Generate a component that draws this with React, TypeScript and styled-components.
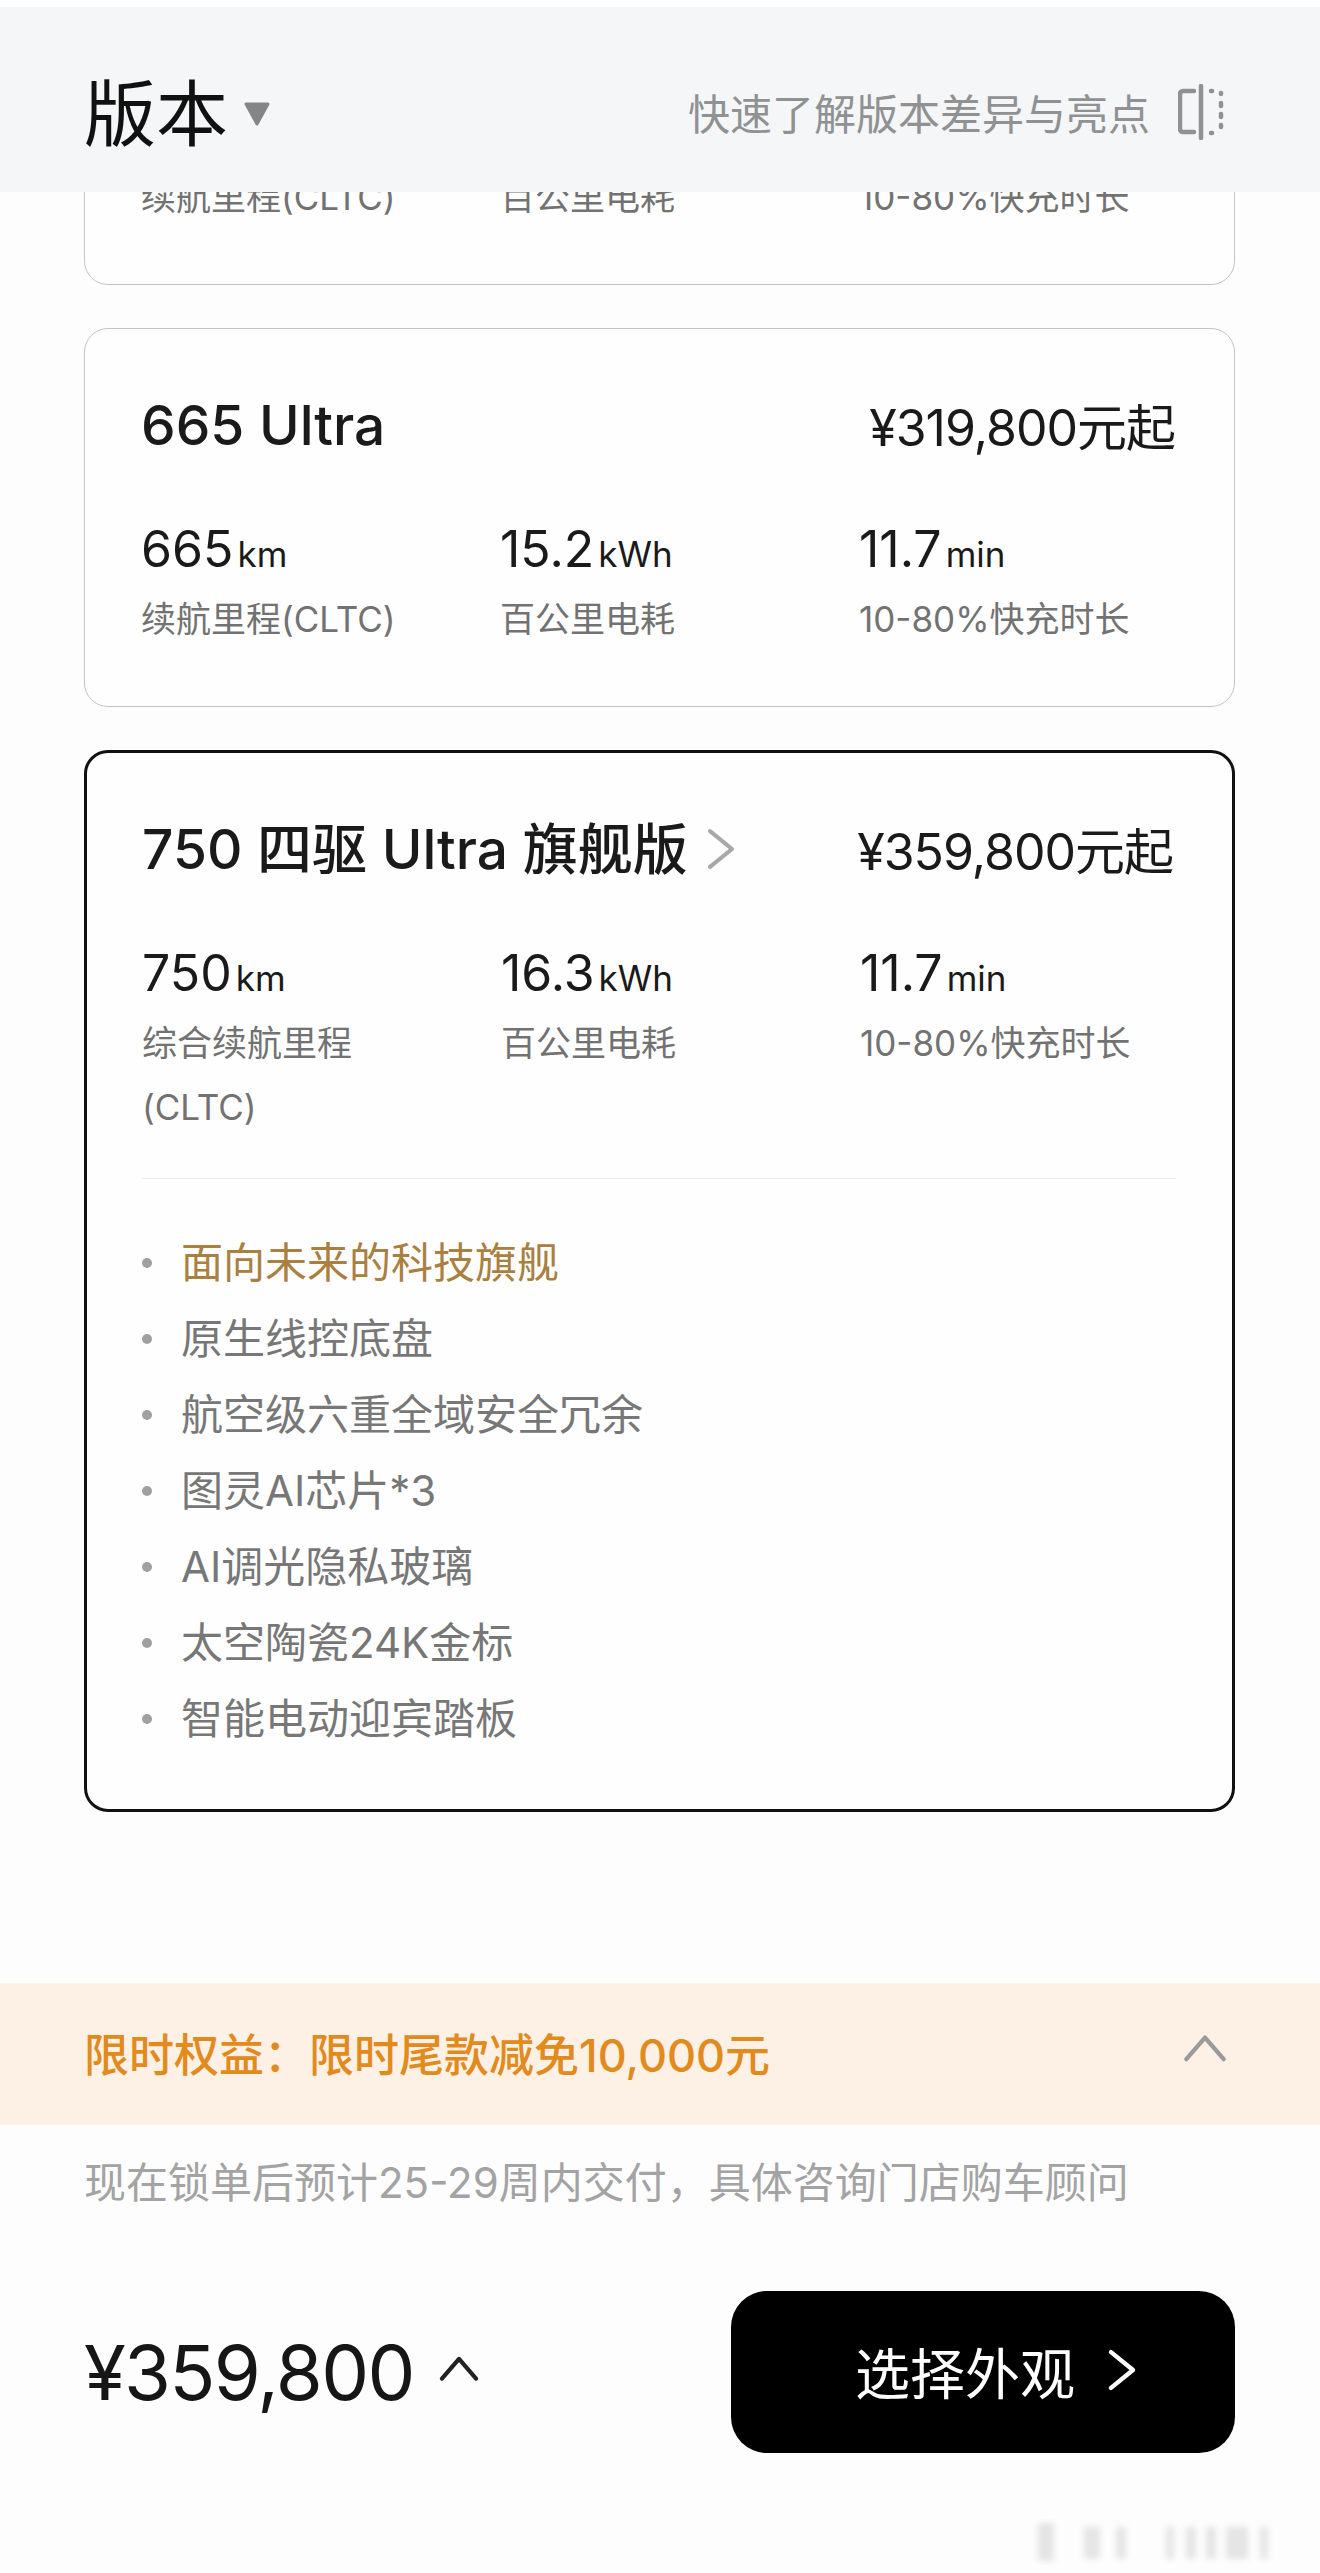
import type { ReactNode } from "react";
import styled, { createGlobalStyle } from "styled-components";

const GlobalStyle = createGlobalStyle`
    html, body {
        margin: 0;
        padding: 0;
        background: #fdfdfd;
    }
    * {
        box-sizing: border-box;
    }
`;

const Page = styled.div`
    position: relative;
    width: 1320px;
    height: 2573px;
    padding-top: 7px;
    overflow: hidden;
    font-family: Inter, "Noto Sans CJK SC", sans-serif;
    color: #1a1a1a;
    background: #fdfdfd;
`;

const Header = styled.header`
    height: 185px;
    padding: 28px 96px 0 84px;
    display: flex;
    align-items: center;
    justify-content: space-between;
    background: #f4f6f7;
`;

const HeaderTitle = styled.div`
    display: flex;
    align-items: center;
    gap: 15px;
    font-size: 72px;
    line-height: 1;
    color: #111;
`;

const HeaderHint = styled.div`
    display: flex;
    align-items: center;
    gap: 28px;
    padding-bottom: 4px;
    font-size: 42px;
    color: #8f9192;
`;

const Content = styled.main`
    padding: 0 85px 0 84px;
    display: flex;
    flex-direction: column;
    gap: 43px;
`;

const ClippedCard = styled.div`
    height: 93px;
    overflow: hidden;
    display: flex;
    align-items: flex-end;
`;

const Card = styled.section<{ $active?: boolean }>`
    width: 100%;
    flex-shrink: 0;
    padding: 58px 56px 0 ${({ $active }) => ($active ? "55px" : "56px")};
    border: ${({ $active }) => ($active ? "3px solid #111" : "1px solid #c4c4c4")};
    border-radius: 24px;
    background: #fefefe;
`;

const FixedCard = styled(Card)`
    height: 379px;
`;

const CardHead = styled.div`
    display: flex;
    align-items: center;
    justify-content: space-between;
`;

const CardName = styled.div`
    display: flex;
    align-items: center;
    gap: 11px;
    font-size: 55px;
    font-weight: 500;
    line-height: 76px;
    color: #1a1a1a;
`;

const CardPrice = styled.div`
    padding: 6px 3px 0 0;
    font-size: 50px;
    letter-spacing: -1px;
    line-height: 70px;
    color: #1a1a1a;
`;

const Stats = styled.div`
    display: grid;
    grid-template-columns: 359px 359px 1fr;
    margin-top: 53px;
`;

const StatValue = styled.div`
    font-size: 50px;
    line-height: 66px;
    color: #1a1a1a;
`;

const StatUnit = styled.span`
    font-size: 35px;
    margin-left: 4px;
`;

const StatLabel = styled.div`
    font-size: 35px;
    line-height: 64px;
    color: #727272;
`;

const Divider = styled.div`
    height: 1px;
    background: #ececec;
    margin-top: 39px;
`;

const Perks = styled.ul`
    list-style: none;
    margin: 0;
    padding: 46px 0 52px;
`;

const Perk = styled.li<{ $gold?: boolean }>`
    display: flex;
    align-items: center;
    font-size: 42px;
    line-height: 76px;
    color: ${({ $gold }) => ($gold ? "#a9803f" : "#777")};

    &::before {
        content: "";
        width: 10px;
        height: 10px;
        border-radius: 50%;
        background: #a0a0a0;
        margin-right: 29px;
    }
`;

const PromoBand = styled.div`
    margin-top: 171px;
    height: 142px;
    padding: 0 92px 4px 84px;
    display: flex;
    align-items: center;
    justify-content: space-between;
    background: #fdf1e6;
    font-size: 45px;
    font-weight: 500;
    color: #e28a1c;
`;

const Delivery = styled.p`
    margin: 28px 84px 0;
    font-size: 42px;
    line-height: 60px;
    color: #a3a3a3;
`;

const Footer = styled.footer`
    margin-top: 78px;
    padding: 0 85px 0 84px;
    display: flex;
    align-items: center;
    justify-content: space-between;
`;

const Total = styled.div`
    display: flex;
    align-items: center;
    gap: 24px;
    font-size: 76px;
    letter-spacing: -1.7px;
    color: #161616;
`;

const ActionButton = styled.button`
    width: 504px;
    height: 162px;
    padding: 0 0 5px 33px;
    border: 0;
    border-radius: 36px;
    background: #000;
    color: #fff;
    font-family: inherit;
    font-size: 55px;
    display: flex;
    align-items: center;
    justify-content: center;
    gap: 25px;
`;

const Watermark = styled.svg`
    position: absolute;
    right: 0;
    bottom: 0;
`;

function CaretDown() {
    return (
        <svg width="28" height="26" viewBox="0 0 28 26">
            <path d="M3 3h22L14 23z" fill="#858585" stroke="#858585" strokeWidth="3" strokeLinejoin="round" />
        </svg>
    );
}

function CompareIcon() {
    return (
        <svg width="46" height="56" viewBox="0 0 46 56" fill="none" stroke="#8f9192" strokeWidth="4.5" strokeLinecap="round">
            <path d="M23 2v52" />
            <path d="M16 7H5a3 3 0 0 0-3 3v35a3 3 0 0 0 3 3h11" />
            <path d="M33 7h1M43 9v1M43 19v3M43 30v3M43 41v2M33 49h1" />
        </svg>
    );
}

function Chevron({ dir, color, size, weight }: { dir: "up" | "right"; color: string; size: number; weight: number }) {
    const d = dir === "up" ? "M3 21L16 6l13 15" : "M8 3l16 13-16 13";
    return (
        <svg width={size} height={size} viewBox="0 0 32 32" fill="none" stroke={color} strokeWidth={weight} strokeLinecap="round" strokeLinejoin="round">
            <path d={d} />
        </svg>
    );
}

type Stat = { value: string; unit: string; label: ReactNode };

function StatRow({ stats }: { stats: Stat[] }) {
    return (
        <Stats>
            {stats.map((s) => (
                <div key={s.unit}>
                    <StatValue>
                        {s.value}
                        <StatUnit>{s.unit}</StatUnit>
                    </StatValue>
                    <StatLabel>{s.label}</StatLabel>
                </div>
            ))}
        </Stats>
    );
}

const perks = [
    "原生线控底盘",
    "航空级六重全域安全冗余",
    "图灵AI芯片*3",
    "AI调光隐私玻璃",
    "太空陶瓷24K金标",
    "智能电动迎宾踏板",
];

export default function App() {
    return (
        <Page>
            <GlobalStyle />
            <Header>
                <HeaderTitle>
                    版本
                    <CaretDown />
                </HeaderTitle>
                <HeaderHint>
                    快速了解版本差异与亮点
                    <CompareIcon />
                </HeaderHint>
            </Header>
            <Content>
                <ClippedCard>
                    <FixedCard>
                        <CardHead>
                            <CardName>565 Ultra</CardName>
                            <CardPrice>¥279,800元起</CardPrice>
                        </CardHead>
                        <StatRow
                            stats={[
                                { value: "565", unit: "km", label: "续航里程(CLTC)" },
                                { value: "14.8", unit: "kWh", label: "百公里电耗" },
                                { value: "11.7", unit: "min", label: "10-80%快充时长" },
                            ]}
                        />
                    </FixedCard>
                </ClippedCard>
                <FixedCard>
                    <CardHead>
                        <CardName>665 Ultra</CardName>
                        <CardPrice>¥319,800元起</CardPrice>
                    </CardHead>
                    <StatRow
                        stats={[
                            { value: "665", unit: "km", label: "续航里程(CLTC)" },
                            { value: "15.2", unit: "kWh", label: "百公里电耗" },
                            { value: "11.7", unit: "min", label: "10-80%快充时长" },
                        ]}
                    />
                </FixedCard>
                <Card $active>
                    <CardHead>
                        <CardName>
                            750 四驱 Ultra 旗舰版
                            <Chevron dir="right" color="#a8a8a8" size={44} weight={3} />
                        </CardName>
                        <CardPrice>¥359,800元起</CardPrice>
                    </CardHead>
                    <StatRow
                        stats={[
                            {
                                value: "750",
                                unit: "km",
                                label: (
                                    <>
                                        综合续航里程
                                        <br />
                                        (CLTC)
                                    </>
                                ),
                            },
                            { value: "16.3", unit: "kWh", label: "百公里电耗" },
                            { value: "11.7", unit: "min", label: "10-80%快充时长" },
                        ]}
                    />
                    <Divider />
                    <Perks>
                        <Perk $gold>面向未来的科技旗舰</Perk>
                        {perks.map((p) => (
                            <Perk key={p}>{p}</Perk>
                        ))}
                    </Perks>
                </Card>
            </Content>
            <PromoBand>
                限时权益：限时尾款减免10,000元
                <Chevron dir="up" color="#9a9a9a" size={46} weight={3} />
            </PromoBand>
            <Delivery>现在锁单后预计25-29周内交付，具体咨询门店购车顾问</Delivery>
            <Footer>
                <Total>
                    ¥359,800
                    <Chevron dir="up" color="#222" size={42} weight={3.2} />
                </Total>
                <ActionButton>
                    选择外观
                    <Chevron dir="right" color="#fff" size={44} weight={3.2} />
                </ActionButton>
            </Footer>
            {/* faint blurred watermark in the corner */}
            <Watermark width="300" height="60" viewBox="0 0 300 60">
                <defs>
                    <filter id="wm-blur">
                        <feGaussianBlur stdDeviation="3" />
                    </filter>
                </defs>
                <g fill="#e4e4e4" filter="url(#wm-blur)">
                    <rect x="18" y="10" width="16" height="38" />
                    <rect x="64" y="14" width="16" height="32" />
                    <rect x="96" y="14" width="10" height="32" />
                    <rect x="146" y="14" width="8" height="32" />
                    <rect x="166" y="14" width="10" height="32" />
                    <rect x="186" y="14" width="10" height="32" />
                    <rect x="206" y="14" width="22" height="32" />
                    <rect x="240" y="14" width="8" height="32" />
                </g>
            </Watermark>
        </Page>
    );
}
